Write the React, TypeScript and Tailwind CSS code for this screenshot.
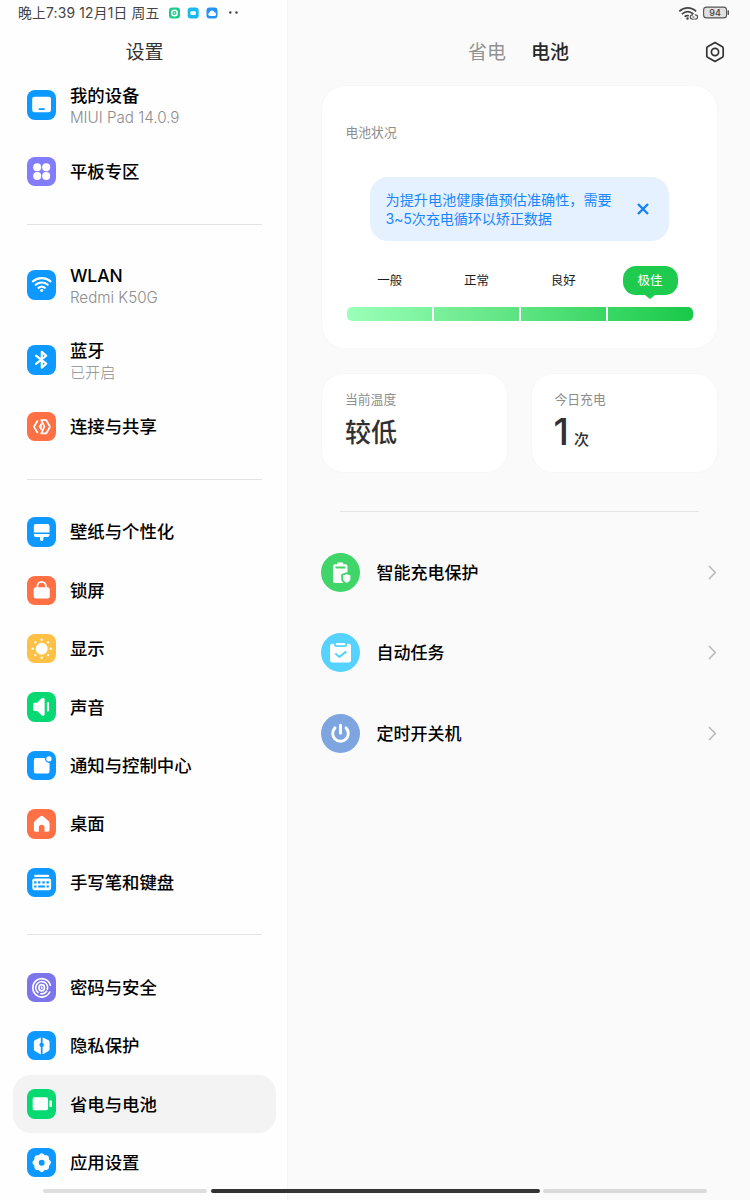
import type { ReactNode } from "react";

type Item = { label: string; sub?: string; color: string; icon: ReactNode; active?: boolean };

const stroke = { fill: "none", stroke: "#fff", strokeLinecap: "round", strokeLinejoin: "round" } as const;

/* Sidebar glyphs share a 30 × 30 canvas */
const device = (
  <>
    <rect x="5.3" y="7" width="19.2" height="15.6" rx="2.2" fill="#fff" />
    <rect x="11.8" y="18.6" width="6.4" height="1.7" rx=".6" fill="#0d99ff" />
  </>
);
const dots = (
  <g fill="#fff">
    <circle cx="10.4" cy="10.5" r="4.1" />
    <circle cx="19.6" cy="10.5" r="4.1" />
    <circle cx="10.4" cy="19.5" r="4.1" />
    <circle cx="19.6" cy="19.5" r="4.1" />
  </g>
);
const wifi = (
  <>
    <path d="M6 11.600c5.200-4.400 12.800-4.400 18 0M8.900 15.100c3.600-3 8.600-3 12.200 0M11.800 18.300c1.900-1.500 4.500-1.500 6.400 0" {...stroke} strokeWidth="2.200" />
    <circle cx="15" cy="20.900" r="1.500" fill="#fff" />
  </>
);
const bluetooth = <path d="M9.200 10.800l10.400 8.300-4.500 4V7l4.500 4L9.200 19.200" {...stroke} strokeWidth="2.200" />;
const share = (
  <>
    <path d="M10.600 9.200L7.100 15l3.500 5.900M14.600 8.200h4.900l4 6.800-4 6.900h-4.900l3.100-6.900z" {...stroke} strokeWidth="1.800" />
    <path d="M14.500 11.800L12.400 15l2.100 3.200z" fill="#fff" stroke="#fff" strokeWidth="1" strokeLinejoin="round" />
  </>
);
const brush = (
  <g fill="#fff">
    <path d="M9 7.200h12a2 2 0 0 1 2 2v6.700H7V9.200a2 2 0 0 1 2-2z" />
    <path d="M7 17.300h16v1.200a2 2 0 0 1-2 2h-3.500q-.8 0-.8.800v1.600a1.700 1.700 0 0 1-3.400 0v-1.600q0-.8-.8-.8H9a2 2 0 0 1-2-2z" />
  </g>
);
const lock = (
  <>
    <path d="M10.600 13v-2.600a4.400 4.400 0 0 1 8.800 0V13" {...stroke} strokeWidth="1.700" />
    <rect x="6.800" y="11.500" width="16.400" height="11.500" rx="2.400" fill="#fff" />
  </>
);
const sun = (
  <g fill="#fff">
    <circle cx="15" cy="15" r="6.100" />
    <circle cx="15" cy="5.800" r="1.200" />
    <circle cx="15" cy="24.200" r="1.200" />
    <circle cx="5.800" cy="15" r="1.200" />
    <circle cx="24.200" cy="15" r="1.200" />
    <circle cx="8.500" cy="8.500" r="1.200" />
    <circle cx="21.500" cy="8.500" r="1.200" />
    <circle cx="8.500" cy="21.500" r="1.200" />
    <circle cx="21.500" cy="21.500" r="1.200" />
  </g>
);
const sound = (
  <g fill="#fff">
    <path d="M8 10.900h2.400l4.500-4.400c1.500-1.300 3.100-.6 3.100 1.200v14.800c0 1.800-1.600 2.500-3.100 1.200l-4.500-4.400H8a1.800 1.800 0 0 1-1.800-1.800v-4.800A1.800 1.800 0 0 1 8 10.900z" />
    <rect x="20.300" y="10.300" width="2.200" height="9.600" rx="1.100" />
  </g>
);
const notice = (
  <g fill="#fff">
    <path d="M9 7.200h9.300a4.500 4.500 0 0 0 4.700 5V21a2 2 0 0 1-2 2H9a2 2 0 0 1-2-2V9.200a2 2 0 0 1 2-2z" />
    <circle cx="22.400" cy="8" r="2.700" />
  </g>
);
const home = (
  <path
    d="M13.300 7.700a2.600 2.600 0 0 1 3.400 0l5.300 4.600c.7.600 1 1.300 1 2.200v6.900c0 1-.7 1.700-1.700 1.700h-3.400V19a2.900 2.900 0 0 0-5.800 0v4.100H8.700c-1 0-1.700-.7-1.700-1.700v-6.900c0-.9.300-1.600 1-2.200z"
    fill="#fff"
  />
);
const keyboard = (
  <>
    <rect x="7.200" y="6.800" width="15.600" height="2.300" rx="1.100" fill="#fff" />
    <rect x="5.400" y="10.600" width="19.200" height="12" rx="2.200" fill="#fff" />
    <path d="M7.300 14.600h2.400M11.300 14.600h2.400M15.700 14.600h2.400M19.900 14.600h2.400M7.300 18.900h2.400M11.400 18.900h6.900M19.900 18.900h2.400" stroke="#0d99ff" strokeWidth="2.200" fill="none" />
  </>
);
const fingerprint = (
  <g fill="none" stroke="#fff" strokeWidth="1.700" strokeLinecap="round">
    <path d="M23.800 12.400A9.100 9.400 0 1 0 23.200 19.400" />
    <path d="M11.200 19.800A6 6.200 0 1 1 20.800 16.500M20 18.600A6 6.200 0 0 1 14.200 21.200" />
    <ellipse cx="15" cy="15" rx="2.800" ry="3.200" />
    <path d="M15 14.300v1.500" />
  </g>
);
const privacy = (
  <g fill="#fff">
    <path d="M14.100 7.400v4.700a2.300 2.300 0 0 0 0 4.200v6.800c0 .6-.4.700-.9.500L8 20.500a2 2 0 0 1-1-1.800v-7.400c0-.8.400-1.400 1-1.800l5.200-2.700c.5-.2.900 0 .9.600z" />
    <path d="M15.900 7.400v4.700a2.300 2.300 0 0 1 0 4.200v6.800c0 .6.400.7.900.5l5.200-3.100a2 2 0 0 0 1-1.800v-7.400c0-.8-.4-1.400-1-1.800l-5.200-2.700c-.5-.2-.9 0-.9.600z" />
  </g>
);
const battery = (
  <g fill="#fff">
    <rect x="5.800" y="8.500" width="15.700" height="13.200" rx="1.800" />
    <rect x="23" y="11.600" width="2.400" height="7" rx="1.200" />
  </g>
);
const gear = (
  <>
    <path
      d="M13.200 6.200a2.600 2.600 0 0 1 3.600 0l1.300 1.100 1.800.1a2.600 2.600 0 0 1 2.500 2.500l.1 1.800 1.200 1.400a2.600 2.600 0 0 1 0 3.600l-1.200 1.400-.1 1.800a2.600 2.600 0 0 1-2.500 2.500l-1.800.1-1.300 1.200a2.600 2.600 0 0 1-3.600 0l-1.300-1.200-1.800-.1a2.600 2.600 0 0 1-2.500-2.500l-.1-1.800-1.200-1.400a2.600 2.600 0 0 1 0-3.600l1.200-1.400.1-1.800a2.600 2.600 0 0 1 2.500-2.500l1.800-.1z"
      fill="#fff"
    />
    <circle cx="15" cy="15" r="3" fill="#0d99ff" />
  </>
);

const BLUE = "bg-[#0d99ff]";
const ORANGE = "bg-[#ff7045]";
const GREEN = "bg-[#06d972]";

const groups: Item[][] = [
  [
    { label: "我的设备", sub: "MIUI Pad 14.0.9", color: BLUE, icon: device },
    { label: "平板专区", color: "bg-[#837dfb]", icon: dots },
  ],
  [
    { label: "WLAN", sub: "Redmi K50G", color: BLUE, icon: wifi },
    { label: "蓝牙", sub: "已开启", color: BLUE, icon: bluetooth },
    { label: "连接与共享", color: ORANGE, icon: share },
  ],
  [
    { label: "壁纸与个性化", color: BLUE, icon: brush },
    { label: "锁屏", color: ORANGE, icon: lock },
    { label: "显示", color: "bg-[#ffc046]", icon: sun },
    { label: "声音", color: GREEN, icon: sound },
    { label: "通知与控制中心", color: BLUE, icon: notice },
    { label: "桌面", color: ORANGE, icon: home },
    { label: "手写笔和键盘", color: BLUE, icon: keyboard },
  ],
  [
    { label: "密码与安全", color: "bg-[#7c74ea]", icon: fingerprint },
    { label: "隐私保护", color: BLUE, icon: privacy },
    { label: "省电与电池", color: GREEN, icon: battery, active: true },
    { label: "应用设置", color: BLUE, icon: gear },
  ],
];

function Row({ item }: { item: Item }) {
  return (
    <li
      className={`mr-[11.500px] ml-[13px] flex shrink-0 items-center rounded-[18px] pl-[14px] ${item.sub ? "h-[75px]" : "h-[58.400px]"} ${item.active ? "bg-[#f3f3f3]" : ""}`}
    >
      <span className={`size-[29.400px] shrink-0 rounded-[8px] ${item.color}`}>
        <svg viewBox="0 0 30 30" className="size-full">{item.icon}</svg>
      </span>
      <span className="ml-[13.500px] flex flex-col pt-px whitespace-nowrap">
        <span className="text-[17.400px] leading-[24px] font-medium text-black">{item.label}</span>
        {item.sub && <span className="text-[15.200px] leading-[20px] font-light text-[#8c8c8c]">{item.sub}</span>}
      </span>
    </li>
  );
}

function Sidebar() {
  return (
    <aside className="flex w-[288px] shrink-0 flex-col border-r border-[#f5f5f5] bg-[#fefefe]">
      <div className="flex h-[26px] shrink-0 items-center pl-[18px] text-[#444]">
        <span className="w-[142px] pt-px text-[13.800px] leading-none tracking-[0.200px] whitespace-nowrap">晚上7:39 12月1日 周五</span>
        <svg viewBox="0 0 72 12" className="ml-[9px] h-[12px] w-[72px]">
          <rect width="11" height="11" y=".5" rx="3" fill="#1dcb8b" />
          <circle cx="5.500" cy="6" r="2.800" fill="none" stroke="#fff" strokeWidth="1.500" />
          <circle cx="5.500" cy="6" r=".8" fill="#fff" />
          <rect x="18.700" y=".5" width="11" height="11" rx="3" fill="#18b9ee" />
          <rect x="21.400" y="4.300" width="5.400" height="3.600" rx="1" fill="#fff" />
          <rect x="37.500" y=".5" width="11" height="11" rx="3" fill="#2593f4" />
          <path d="M40.500 9a1.800 1.800 0 0 1 0-3.400 2.600 2.600 0 0 1 5-.3A2 2 0 0 1 46 9z" fill="#fff" />
          <circle cx="61.300" cy="5.500" r="1.200" fill="#444" />
          <circle cx="67.500" cy="5.500" r="1.200" fill="#444" />
        </svg>
      </div>
      <h1 className="flex h-[41.500px] shrink-0 items-start justify-center pt-[13px] pl-[2px] text-[19px] leading-[28px] text-[#333]">设置</h1>
      <nav className="flex flex-col">
        {groups.map((g, i) => (
          <div key={i}>
            {i > 0 && (
              <div className="flex h-[46.700px] items-center pr-[25px] pl-[27px]">
                <div className="h-px flex-1 bg-[#e3e3e3]" />
              </div>
            )}
            <ul>
              {g.map((item) => <Row key={item.label} item={item} />)}
            </ul>
          </div>
        ))}
      </nav>
    </aside>
  );
}

const levels = [
  { label: "一般", bar: "rounded-l-[5px] from-[#9bffb9] to-[#7bf29d]" },
  { label: "正常", bar: "from-[#7bf09c] to-[#5ce381]" },
  { label: "良好", bar: "from-[#5de583] to-[#38d663]" },
  { label: "极佳", bar: "rounded-r-[5px] from-[#38d864] to-[#18c849]", active: true },
];

const features = [
  {
    label: "智能充电保护",
    color: "bg-[#40d568]",
    icon: (
      <>
        <path d="M14 11.200h2.200v-.7c0-.6.400-1 1-1h4.100c.6 0 1 .4 1 1v.7h2.200c1.200 0 2 .8 2 2v14.700c0 1.200-.8 2-2 2H14c-1.200 0-2-.8-2-2V13.200c0-1.200.8-2 2-2z" fill="#fff" />
        <path d="M15.300 14.500h8.200" stroke="#40d568" strokeWidth="1.900" strokeLinecap="round" />
        <path d="M25.700 20.200l4.600 1.700v3.700c0 2.500-1.900 4.200-4.600 5.200-2.700-1-4.600-2.700-4.600-5.200v-3.700z" fill="#fff" stroke="#40d568" strokeWidth="1.800" />
      </>
    ),
  },
  {
    label: "自动任务",
    color: "bg-[#55d2ff]",
    icon: (
      <>
        <path d="M11 10.700h1.700a3.200 3.200 0 0 0 3.200 3.200h7.300a3.200 3.200 0 0 0 3.200-3.200h1.700c1.100 0 1.900.8 1.900 1.900v14.600c0 1.300-.9 2.200-2.200 2.200H11.300c-1.300 0-2.200-.9-2.200-2.200V12.600c0-1.100.8-1.900 1.900-1.900z" fill="#fff" />
        <rect x="14.700" y="9.900" width="9.800" height="2.400" rx="1.200" fill="#fff" />
        <path d="M15 20.900l3.500 3 6.200-5" fill="none" stroke="#55d2ff" strokeWidth="2" strokeLinecap="round" strokeLinejoin="round" />
      </>
    ),
  },
  {
    label: "定时开关机",
    color: "bg-[#7ea5df]",
    icon: (
      <path d="M19.500 11.300v8M14 13.900a7.800 7.800 0 1 0 11 0" fill="none" stroke="#fff" strokeWidth="2.900" strokeLinecap="round" />
    ),
  },
];

function StatusCard() {
  return (
    <section className="flex h-[264px] flex-col rounded-[24px] border border-[#f7f7f7] bg-white px-[23.500px] pt-[37px]">
      <h2 className="text-[12.800px] leading-[20px] text-[#8d8d8d]">电池状况</h2>
      <div className="mx-[24px] mt-[34px] flex h-[64px] w-[299px] items-center rounded-[18px] bg-[#e5f1ff] pl-[16px] text-[#1986ff]">
        <p className="w-[232px] text-[14.150px] leading-[19px] whitespace-nowrap">
          为提升电池健康值预估准确性，需要
          <br />
          <span className="tracking-[-0.150px]">3~5次充电循环以矫正数据</span>
        </p>
        <svg viewBox="0 0 12 12" className="ml-[19px] size-[12px]">
          <path d="M1 1l10 10M11 1L1 11" stroke="#1480f5" strokeWidth="2.300" />
        </svg>
      </div>
      <div className="mt-[25px] ml-px grid w-[347px] grid-cols-4">
        {levels.map((l) => (
          <div key={l.label} className="flex h-[29px] justify-center text-[12.500px] leading-[29px]">
            {l.active ? (
              <span className="relative w-[55px] rounded-[13px] bg-[#1fcb4e] text-center text-white">
                {l.label}
                <svg viewBox="0 0 10 4" className="absolute top-[28.500px] left-[22.500px] h-[4px] w-[10px]">
                  <path d="M0 0h10L5.700 3.400a1.200 1.200 0 0 1-1.400 0z" fill="#1fcb4e" />
                </svg>
              </span>
            ) : (
              <span className="text-[#1c1c1c]">{l.label}</span>
            )}
          </div>
        ))}
      </div>
      <div className="mt-[11.500px] ml-[1.500px] grid w-[346px] grid-cols-4 gap-[2.500px]">
        {levels.map((l) => <div key={l.label} className={`h-[14px] bg-linear-to-r ${l.bar}`} />)}
      </div>
    </section>
  );
}

function Detail() {
  return (
    <main className="flex flex-1 flex-col bg-[#fafafa] pr-[34px] pl-[33px]">
      <div className="-mr-[12px] flex h-[26px] shrink-0 items-center justify-end">
        <svg viewBox="0 0 52 16" className="h-[16px] w-[52px]" fill="none">
          <path d="M1.300 6.400c5-4.700 11.900-4.700 16.800 0M3.900 9.200c3.600-3.200 8-3.200 11.600 0M6.600 11.700c1.400-1.100 2.800-1.300 4.300-.9" stroke="#444" strokeWidth="1.700" />
          <circle cx="9.500" cy="13.500" r="1.200" fill="#444" />
          <path d="M15 9.800h-.5a2.100 2.100 0 0 0 0 4.300h1.200M14.500 12h2M16.800 9.800h.6a2.100 2.100 0 0 1 0 4.300h-1" stroke="#555" strokeWidth="1.200" />
          <rect x="25.600" y="2.100" width="23" height="10.800" rx="3" fill="#e0e0e0" stroke="#555" strokeWidth="1.100" />
          <path d="M50.300 6v3.200" stroke="#555" strokeWidth="1.500" strokeLinecap="round" />
          <text x="37.100" y="10.800" textAnchor="middle" fontSize="9" fontWeight="500" fill="#444">94</text>
        </svg>
      </div>
      <header className="-mr-[8px] flex h-[52px] shrink-0 items-center text-[19px] leading-[28px]">
        <span className="ml-[147px] pt-[2px] text-[#929292]">省电</span>
        <span className="ml-[25px] pt-[2px] font-medium text-[#292929]">电池</span>
        <svg viewBox="0 0 22 22" className="ml-auto size-[22px]" fill="none" stroke="#333" strokeWidth="1.700" strokeLinejoin="round">
          <path d="M11 1.600l7.400 4.200q.8.500.8 1.400v7.600q0 .9-.8 1.400L11 20.400l-7.400-4.200q-.8-.5-.8-1.400V7.200q0-.9.800-1.400z" />
          <circle cx="11" cy="11" r="3.600" />
        </svg>
      </header>
      <div className="mt-[7px] flex flex-col gap-[24px]">
        <StatusCard />
        <div className="grid grid-cols-2 gap-[23px]">
          <section className="h-[100px] rounded-[22px] border border-[#f7f7f7] bg-white px-[23px] pt-[16px]">
            <h2 className="text-[12.800px] leading-[20px] text-[#8d8d8d]">当前温度</h2>
            <p className="mt-[4px] text-[26px] leading-[38px] font-medium text-[#303030]">较低</p>
          </section>
          <section className="h-[100px] rounded-[22px] border border-[#f7f7f7] bg-white px-[22.500px] pt-[16px]">
            <h2 className="text-[12.800px] leading-[20px] text-[#8d8d8d]">今日充电</h2>
            <p className="mt-[2px] flex items-baseline leading-[40px] font-medium text-[#303030]">
              <span className="-ml-px w-[20.500px] text-[37px]">1</span>
              <span className="text-[15px]">次</span>
            </p>
          </section>
        </div>
      </div>
      <div className="mx-[19px] mt-[38px] h-px shrink-0 bg-[#e4e4e4]" />
      <ul className="mt-[20px] flex flex-col">
        {features.map((f) => (
          <li key={f.label} className="flex h-[80.500px] items-center">
            <span className={`size-[39px] rounded-full ${f.color}`}>
              <svg viewBox="0 0 39 39" className="size-full">{f.icon}</svg>
            </span>
            <span className="ml-[16.500px] pt-px text-[17px] leading-[24px] font-medium text-black">{f.label}</span>
            <svg viewBox="0 0 9 15" className="mr-px ml-auto h-[15px] w-[9px]">
              <path d="M1 1l6.300 6.500L1 14" fill="none" stroke="#b8b8b8" strokeWidth="1.500" />
            </svg>
          </li>
        ))}
      </ul>
    </main>
  );
}

export default function App() {
  return (
    <div className="relative flex h-[1200px] w-[750px] overflow-hidden font-['Inter','Noto_Sans_CJK_SC',sans-serif]" lang="zh-CN">
      <Sidebar />
      <Detail />
      <div className="absolute bottom-[7px] left-[43px] flex h-[4px] w-[664px] gap-[3.500px]">
        <div className="w-[164px] rounded-full bg-[#dedede]" />
        <div className="flex-1 rounded-full bg-[#333]" />
        <div className="w-[164px] rounded-full bg-[#dadada]" />
      </div>
    </div>
  );
}
